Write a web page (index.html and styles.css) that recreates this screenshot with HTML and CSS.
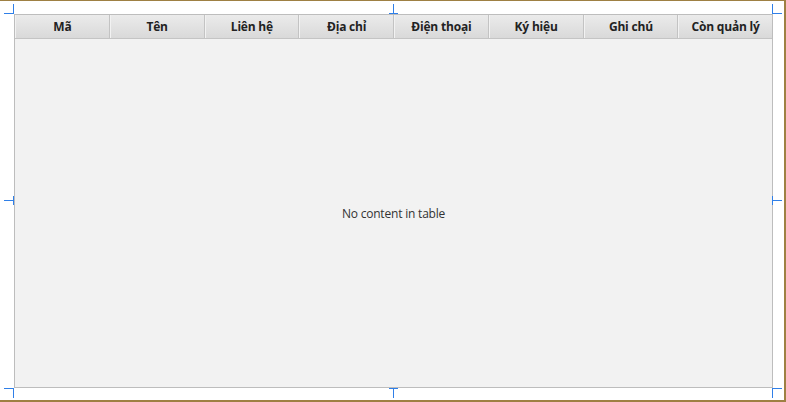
FILE: index.html
```html
<!DOCTYPE html>
<html lang="vi">
<head>
<meta charset="utf-8">
<link rel="stylesheet" href="styles.css">
</head>
<body>
<div class="frame">
  <div class="table">
    <div class="header">
      <div class="col">Mã</div>
      <div class="col">Tên</div>
      <div class="col">Liên hệ</div>
      <div class="col">Địa chỉ</div>
      <div class="col">Điện thoại</div>
      <div class="col">Ký hiệu</div>
      <div class="col">Ghi chú</div>
      <div class="col">Còn quản lý</div>
    </div>
    <div class="body">No content in table</div>
  </div>
  <span class="mark tl"></span>
  <span class="mark tr"></span>
  <span class="mark bl"></span>
  <span class="mark br"></span>
  <span class="mark tm"></span>
  <span class="mark bm"></span>
  <span class="mark lm"></span>
  <span class="mark rm"></span>
</div>
</body>
</html>
```

FILE: styles.css
```css
html, body {
  margin: 0;
  padding: 0;
  background: #ffffff;
}

.frame {
  position: relative;
  box-sizing: border-box;
  width: 786px;
  height: 402px;
  border-top: 1px solid #9e8043;
  border-right: 2px solid #9e8043;
  border-bottom: 2px solid #9e8043;
  padding: 13px 0 0 14px;
  font-family: "Open Sans", "Noto Sans", sans-serif;
}

.table {
  box-sizing: border-box;
  width: 759px;
  height: 374px;
  border: 1px solid #bdbdbd;
  background: #f2f2f2;
  display: flex;
  flex-direction: column;
}

.header {
  display: flex;
  height: 23px;
  border-bottom: 1px solid #c4c4c4;
}

.col {
  flex: 1;
  display: flex;
  align-items: center;
  justify-content: center;
  background: linear-gradient(#ebebeb, #d9d9d9);
  border-left: 1px solid #f2f2f2;
  border-right: 1px solid #c3c3c3;
  font-size: 12px;
  font-weight: 700;
  color: #222;
  letter-spacing: -0.2px;
}

.col:last-child {
  border-right: none;
}

.body {
  flex: 1;
  display: flex;
  align-items: center;
  justify-content: center;
  font-size: 12px;
  color: #333;
  letter-spacing: -0.2px;
}

.mark {
  position: absolute;
  display: block;
}

.mark::before,
.mark::after {
  content: "";
  position: absolute;
  background: #2f7fe8;
}

/* corners: L shapes */
.tl { left: 4px; top: 3px; width: 10px; height: 10px; }
.tl::before { right: 0; top: 0; width: 1px; height: 10px; }
.tl::after { left: 0; bottom: 0; width: 10px; height: 1px; }

.tr { left: 772px; top: 3px; width: 10px; height: 10px; }
.tr::before { left: 0; top: 0; width: 1px; height: 10px; }
.tr::after { left: 0; bottom: 0; width: 10px; height: 1px; }

.bl { left: 4px; top: 387px; width: 10px; height: 10px; }
.bl::before { right: 0; top: 0; width: 1px; height: 10px; }
.bl::after { left: 0; top: 0; width: 10px; height: 1px; }

.br { left: 772px; top: 387px; width: 10px; height: 10px; }
.br::before { left: 0; top: 0; width: 1px; height: 10px; }
.br::after { left: 0; top: 0; width: 10px; height: 1px; }

/* middle ticks: T shapes */
.tm { left: 389px; top: 3px; width: 9px; height: 10px; }
.tm::before { left: 4px; top: 0; width: 1px; height: 10px; }
.tm::after { left: 0; bottom: 0; width: 9px; height: 1px; }

.bm { left: 389px; top: 387px; width: 9px; height: 10px; }
.bm::before { left: 4px; top: 0; width: 1px; height: 10px; }
.bm::after { left: 0; top: 0; width: 9px; height: 1px; }

.lm { left: 4px; top: 195px; width: 10px; height: 9px; }
.lm::before { right: 0; top: 0; width: 1px; height: 9px; }
.lm::after { left: 0; top: 4px; width: 10px; height: 1px; }

.rm { left: 772px; top: 195px; width: 10px; height: 9px; }
.rm::before { left: 0; top: 0; width: 1px; height: 9px; }
.rm::after { left: 0; top: 4px; width: 10px; height: 1px; }
```
